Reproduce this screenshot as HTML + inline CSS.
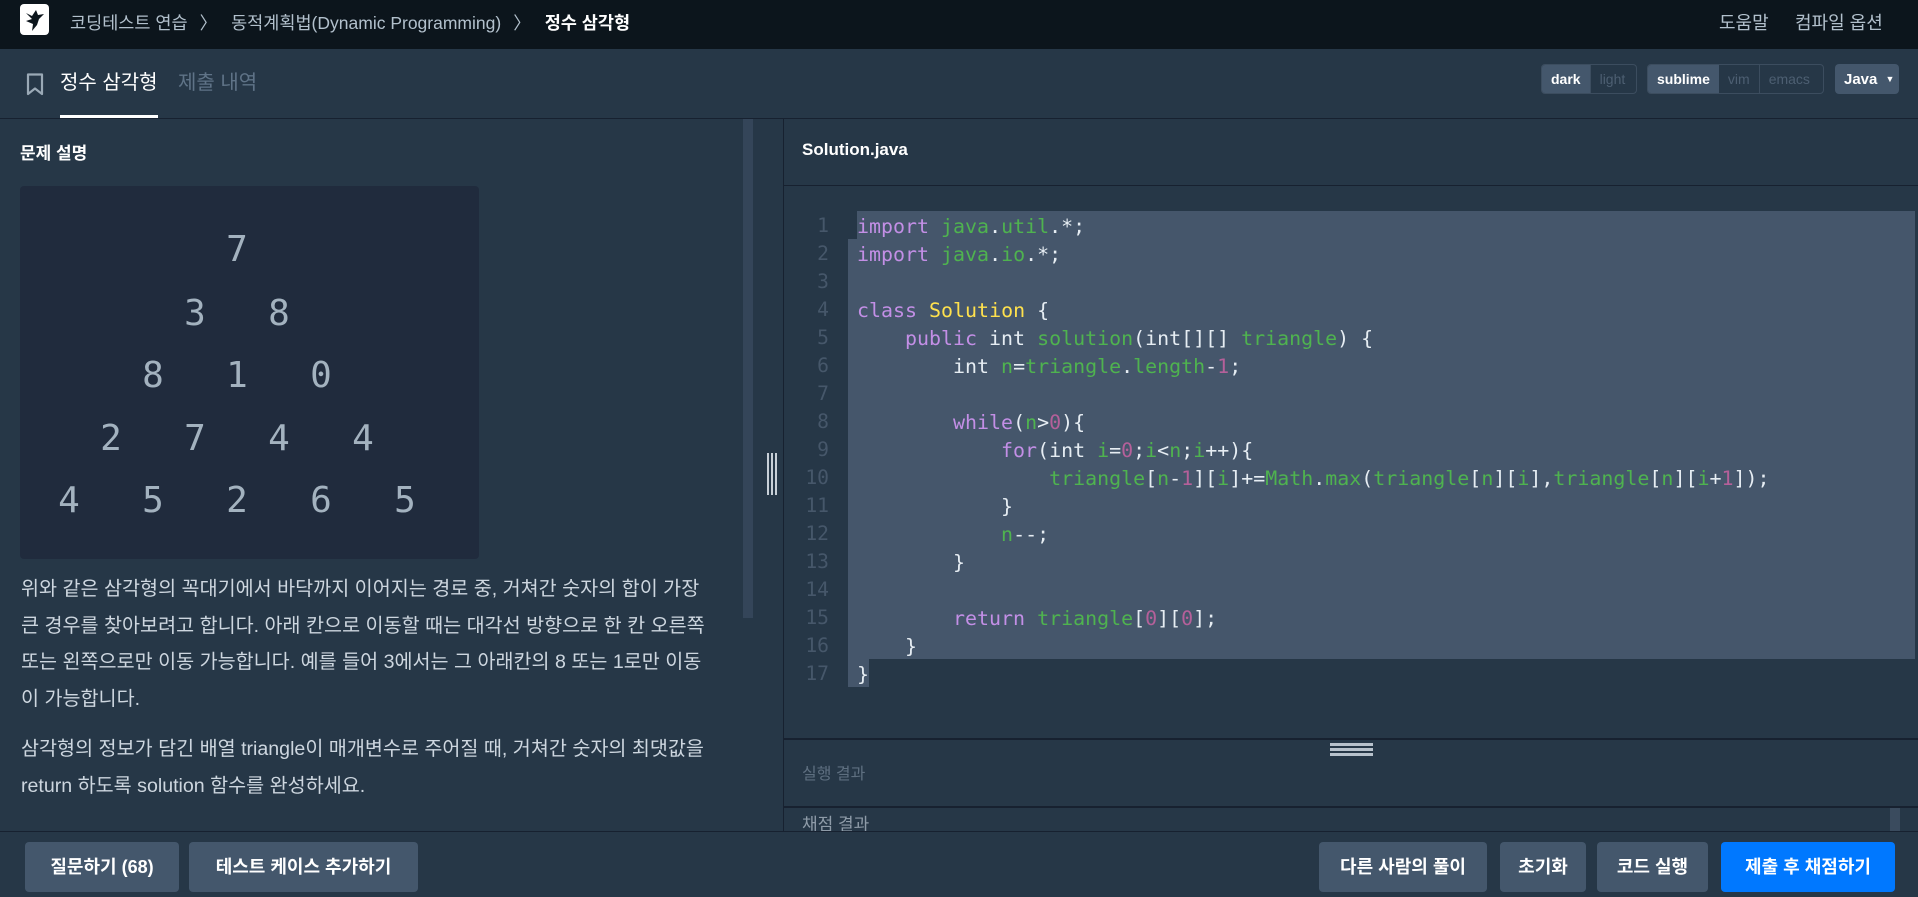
<!DOCTYPE html>
<html><head><meta charset="utf-8"><style>
*{margin:0;padding:0;box-sizing:border-box}
body{width:1918px;height:897px;overflow:hidden;background:#263747;font-family:"Liberation Sans","Noto Sans CJK KR",sans-serif;position:relative;color:#fff}
.abs{position:absolute}
.top{left:0;top:0;width:1918px;height:49px;background:#0c151c}
.bc{top:0;height:49px;line-height:47px;font-size:17.5px;color:#b2c0cc;white-space:nowrap}
.tabbar{left:0;top:49px;width:1918px;height:70px;background:#263747;border-bottom:1px solid #172130}
.seg{top:64px;height:30px;border:1px solid #3c4d5f;border-radius:4px;display:flex;overflow:hidden;font-size:14px;line-height:28px}
.seg span{padding:0 9px;color:#4d5f72;border-left:1px solid #3c4d5f}
.seg span.on{background:#44576c;color:#fff;font-weight:bold;border-left:none}
.p{left:21px;font-size:19.6px;color:#cdd6df;white-space:nowrap;line-height:36.5px}
.dig{font-family:"DejaVu Sans Mono",monospace;font-size:36px;color:#a3b2bf;width:40px;text-align:center;line-height:40px}
.code{font-family:"DejaVu Sans Mono",monospace;font-size:19.94px;line-height:28px;white-space:pre;color:#e6edf3}
.ln{font-family:"DejaVu Sans Mono",monospace;font-size:19.67px;line-height:28px;color:#46576a;text-align:right;width:60px;left:769px;top:212px}
.k{color:#c38fe6}.g{color:#4fb34f}.y{color:#ffe14d}.n{color:#b5609a}
.btn{top:842px;height:50px;background:#44576c;border-radius:4px;font-size:18px;font-weight:bold;color:#fff;text-align:center;line-height:50px;white-space:nowrap}
</style></head><body>
<div class="abs top"></div>
<div class="abs" style="left:20px;top:4px;width:29px;height:31px;background:#fff;border-radius:4px">
<svg width="29" height="31" viewBox="0 0 29 31"><path d="M6 9 L12 12 L16 6 L18 11 L24 10 L19 15 L17 21 L12 27 L13 20 L6 17 L12 15 Z" fill="#0c151c"/></svg></div>
<div class="abs bc" style="left:70px">코딩테스트 연습<span style="margin:0 14px 0 12px">〉</span>동적계획법(Dynamic Programming)<span style="margin:0 14px 0 12px">〉</span><b style="color:#fff">정수 삼각형</b></div>
<div class="abs bc" style="left:1719px;font-size:18px">도움말</div>
<div class="abs bc" style="left:1795px;font-size:18px">컴파일 옵션</div>

<div class="abs tabbar"></div>
<svg class="abs" style="left:26px;top:73px" width="18" height="23" viewBox="0 0 18 23"><path d="M2 1.5 H16 V21 L9 15.5 L2 21 Z" fill="none" stroke="#9aa9b6" stroke-width="2.2" stroke-linejoin="round"/></svg>
<div class="abs" style="left:60px;top:66px;font-size:20px;color:#fff">정수 삼각형</div>
<div class="abs" style="left:178px;top:66px;font-size:20px;color:#5f7387">제출 내역</div>
<div class="abs" style="left:60px;top:115px;width:98px;height:3px;background:#fff"></div>
<div class="abs seg" style="left:1541px;width:96px"><span class="on">dark</span><span>light</span></div>
<div class="abs seg" style="left:1647px;width:177px"><span class="on">sublime</span><span style="border-left:none">vim</span><span>emacs</span></div>
<div class="abs" style="left:1835px;top:64px;width:64px;height:30px;background:#44576c;border-radius:4px;font-size:15px;font-weight:bold;line-height:30px;padding-left:9px">Java <span style="font-size:9px;margin-left:4px;vertical-align:2px">▼</span></div>

<!-- left -->
<div class="abs" style="left:20px;top:139px;font-size:17px;font-weight:bold">문제 설명</div>
<div class="abs" style="left:20px;top:186px;width:459px;height:373px;background:#202b3d;border-radius:4px"></div>
<div class="abs dig" style="left:217px;top:230px">7</div>
<div class="abs dig" style="left:175px;top:294px">3</div><div class="abs dig" style="left:259px;top:294px">8</div>
<div class="abs dig" style="left:133px;top:356px">8</div><div class="abs dig" style="left:217px;top:356px">1</div><div class="abs dig" style="left:301px;top:356px">0</div>
<div class="abs dig" style="left:91px;top:419px">2</div><div class="abs dig" style="left:175px;top:419px">7</div><div class="abs dig" style="left:259px;top:419px">4</div><div class="abs dig" style="left:343px;top:419px">4</div>
<div class="abs dig" style="left:49px;top:481px">4</div><div class="abs dig" style="left:133px;top:481px">5</div><div class="abs dig" style="left:217px;top:481px">2</div><div class="abs dig" style="left:301px;top:481px">6</div><div class="abs dig" style="left:385px;top:481px">5</div>
<div class="abs p" style="top:571px">위와 같은 삼각형의 꼭대기에서 바닥까지 이어지는 경로 중, 거쳐간 숫자의 합이 가장<br>큰 경우를 찾아보려고 합니다. 아래 칸으로 이동할 때는 대각선 방향으로 한 칸 오른쪽<br>또는 왼쪽으로만 이동 가능합니다. 예를 들어 3에서는 그 아래칸의 8 또는 1로만 이동<br>이 가능합니다.</div>
<div class="abs p" style="top:731px">삼각형의 정보가 담긴 배열 triangle이 매개변수로 주어질 때, 거쳐간 숫자의 최댓값을<br>return 하도록 solution 함수를 완성하세요.</div>
<div class="abs" style="left:743px;top:119px;width:10px;height:499px;background:#344559"></div>
<div class="abs" style="left:767px;top:453px;width:2px;height:42px;background:#c8d0d8"></div>
<div class="abs" style="left:771px;top:453px;width:2px;height:42px;background:#c8d0d8"></div>
<div class="abs" style="left:775px;top:453px;width:2px;height:42px;background:#c8d0d8"></div>

<!-- right -->
<div class="abs" style="left:783px;top:119px;width:1px;height:713px;background:#172130"></div>
<div class="abs" style="left:802px;top:140px;font-size:17px;font-weight:bold">Solution.java</div>
<div class="abs" style="left:784px;top:185px;width:1134px;height:1px;background:#172130"></div>
<div class="abs" style="left:857px;top:211px;width:1058px;height:28px;background:#45566b"></div>
<div class="abs" style="left:848px;top:239px;width:1067px;height:420px;background:#45566b"></div>
<div class="abs" style="left:848px;top:659px;width:21px;height:28px;background:#45566b"></div>
<div class="abs ln">1<br>2<br>3<br>4<br>5<br>6<br>7<br>8<br>9<br>10<br>11<br>12<br>13<br>14<br>15<br>16<br>17</div>
<div class="abs code" style="left:857px;top:212px"><span class="k">import</span> <span class="g">java</span>.<span class="g">util</span>.*;
<span class="k">import</span> <span class="g">java</span>.<span class="g">io</span>.*;

<span class="k">class</span> <span class="y">Solution</span> {
    <span class="k">public</span> int <span class="g">solution</span>(int[][] <span class="g">triangle</span>) {
        int <span class="g">n</span>=<span class="g">triangle</span>.<span class="g">length</span>-<span class="n">1</span>;

        <span class="k">while</span>(<span class="g">n</span>&gt;<span class="n">0</span>){
            <span class="k">for</span>(int <span class="g">i</span>=<span class="n">0</span>;<span class="g">i</span>&lt;<span class="g">n</span>;<span class="g">i</span>++){
                <span class="g">triangle</span>[<span class="g">n</span>-<span class="n">1</span>][<span class="g">i</span>]+=<span class="g">Math</span>.<span class="g">max</span>(<span class="g">triangle</span>[<span class="g">n</span>][<span class="g">i</span>],<span class="g">triangle</span>[<span class="g">n</span>][<span class="g">i</span>+<span class="n">1</span>]);
            }
            <span class="g">n</span>--;
        }

        <span class="k">return</span> <span class="g">triangle</span>[<span class="n">0</span>][<span class="n">0</span>];
    }
}</div>
<div class="abs" style="left:784px;top:738px;width:1134px;height:2px;background:#172130"></div>
<div class="abs" style="left:1330px;top:743px;width:43px;height:3px;background:#b8c2cc"></div>
<div class="abs" style="left:1330px;top:748px;width:43px;height:3px;background:#b8c2cc"></div>
<div class="abs" style="left:1330px;top:753px;width:43px;height:3px;background:#b8c2cc"></div>
<div class="abs" style="left:802px;top:760px;font-size:16px;color:#5e6f80">실행 결과</div>
<div class="abs" style="left:784px;top:806px;width:1134px;height:2px;background:#172130"></div>
<div class="abs" style="left:802px;top:812px;height:20px;overflow:hidden;font-size:17px;color:#8e9ba8;line-height:26px">채점 결과</div>
<div class="abs" style="left:1890px;top:808px;width:10px;height:24px;background:#3a4b5e"></div>

<!-- bottom -->
<div class="abs" style="left:0;top:831px;width:1918px;height:66px;background:#263747;border-top:1px solid #172130"></div>
<div class="abs btn" style="left:25px;width:154px">질문하기 (68)</div>
<div class="abs btn" style="left:189px;width:229px">테스트 케이스 추가하기</div>
<div class="abs btn" style="left:1319px;width:168px">다른 사람의 풀이</div>
<div class="abs btn" style="left:1500px;width:86px">초기화</div>
<div class="abs btn" style="left:1597px;width:111px">코드 실행</div>
<div class="abs btn" style="left:1721px;width:174px;background:#0078ff">제출 후 채점하기</div>
</body></html>
